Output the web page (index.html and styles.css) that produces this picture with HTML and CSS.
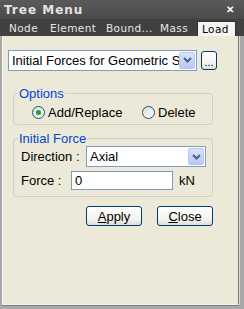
FILE: index.html
```html
<!DOCTYPE html>
<html>
<head>
<meta charset="utf-8">
<link rel="stylesheet" href="styles.css">
</head>
<body>
<div class="win">
  <div class="title">
    <span class="title-text">Tree Menu</span>
    <span class="close">✕</span>
  </div>
  <div class="tabs">
    <span class="tab t-node">Node</span>
    <span class="tab t-elem">Element</span>
    <span class="tab t-bound">Bound...</span>
    <span class="tab t-mass">Mass</span>
    <span class="tab active">Load</span>
  </div>
  <div class="body">
    <div class="top-row">
      <div class="select main-select">
        <span class="sel-text">Initial Forces for Geometric S</span>
        <span class="arrow"><svg width="9" height="6" viewBox="0 0 9 6"><path d="M1 1 L4.5 4.5 L8 1" fill="none" stroke="#4d6185" stroke-width="2"/></svg></span>
      </div>
      <div class="btn dots">...</div>
    </div>

    <fieldset class="group opts">
      <legend>Options</legend>
      <div class="radios">
        <label class="radio r-add"><span class="circle checked"></span>Add/Replace</label>
        <label class="radio r-del"><span class="circle"></span>Delete</label>
      </div>
    </fieldset>

    <fieldset class="group force">
      <legend>Initial Force</legend>
      <div class="row dir-row">
        <span class="lbl lbl-dir">Direction :</span>
        <div class="select dir-select">
          <span class="sel-text">Axial</span>
          <span class="arrow"><svg width="9" height="6" viewBox="0 0 9 6"><path d="M1 1 L4.5 4.5 L8 1" fill="none" stroke="#4d6185" stroke-width="2"/></svg></span>
        </div>
      </div>
      <div class="row force-row">
        <span class="lbl lbl-force">Force :</span>
        <div class="input">0</div>
        <span class="unit">kN</span>
      </div>
    </fieldset>

    <div class="buttons">
      <div class="btn push"><u>A</u>pply</div>
      <div class="btn push"><u>C</u>lose</div>
    </div>
  </div>
</div>
</body>
</html>
```

FILE: styles.css
```css
html, body {
  margin: 0;
  padding: 0;
  width: 244px;
  height: 309px;
  overflow: hidden;
  background: #a8a8a8;
  font-family: "Liberation Sans", Arial, sans-serif;
}
.win {
  width: 244px;
  height: 309px;
  display: flex;
  flex-direction: column;
}
.title {
  height: 19px;
  flex: none;
  background: linear-gradient(#5a5a5a, #4a4a4a);
  display: flex;
  align-items: center;
  justify-content: space-between;
  padding: 0 10px 0 4px;
}
.title-text {
  color: #e4e4e4;
  font-family: "DejaVu Sans", sans-serif;
  font-weight: bold;
  font-size: 12px;
  letter-spacing: 1px;
}
.close {
  color: #ffffff;
  font-size: 10px;
  font-weight: bold;
}
.tabs {
  height: 17px;
  flex: none;
  background: #404040;
  display: flex;
  align-items: flex-end;
  padding-left: 9px;
  padding-right: 8px;
}
.tab {
  color: #e6e6e6;
  font-family: "DejaVu Sans", sans-serif;
  font-size: 10.5px;
  line-height: 15px;
  letter-spacing: 0.4px;
}
.t-node { width: 41px; }
.t-elem { width: 56px; }
.t-bound { width: 54px; }
.t-mass { width: 37px; }
.tab.active {
  background: #f4f4f0;
  color: #000;
  width: 39px;
  height: 15px;
  padding-left: 4px;
  box-sizing: border-box;
  border: 1px solid #303030;
  border-bottom: none;
  border-radius: 2px 2px 0 0;
}
.body {
  flex: 1;
  margin: 0 5px 4px 2px;
  background: #ece9d8;
  border-left: 1px solid #f8f8f8;
  border-right: 1px solid #7a7a7a;
  border-bottom: 1px solid #f0f0f0;
  box-shadow: 1px 0 0 #d8d8d8, 0 1px 0 #808080;
  padding: 14px 0 0 5px;
  font-size: 13px;
  color: #000;
}
.top-row {
  display: flex;
  align-items: center;
  gap: 4px;
  height: 20px;
}
.select {
  background: #fff;
  border: 1px solid #7f9db9;
  display: flex;
  align-items: center;
  box-sizing: border-box;
  padding: 1px 1px 1px 3px;
}
.main-select {
  width: 189px;
  height: 21px;
}
.sel-text {
  flex: 1;
  white-space: nowrap;
  overflow: hidden;
}
.arrow {
  width: 16px;
  height: 17px;
  flex: none;
  background: linear-gradient(#d9e3fb, #b6c9f5);
  border: 1px solid #b6c8f0;
  box-sizing: border-box;
  border-radius: 2px;
  display: flex;
  align-items: center;
  justify-content: center;
}
.btn {
  background: linear-gradient(#ffffff, #f2f2ee 70%, #dedcd4);
  border: 1px solid #003c74;
  border-radius: 3px;
  box-sizing: border-box;
  display: flex;
  align-items: center;
  justify-content: center;
  font-size: 13px;
}
.dots {
  width: 16px;
  height: 19px;
  font-size: 11px;
  padding-top: 3px;
}
.group {
  margin: 0;
  border: 1px solid #d0d0bf;
  border-radius: 4px;
  padding: 0;
  width: 200px;
  box-sizing: border-box;
  margin-left: 5px;
}
.group legend {
  color: #0046d5;
  padding: 0 1px;
  margin-left: 4px;
  font-size: 13px;
  line-height: 13px;
}
.opts {
  margin-top: 17px;
  height: 38px;
}
.radios {
  display: flex;
  padding: 5px 0 0 18px;
}
.radio {
  display: flex;
  align-items: center;
  gap: 3px;
  height: 14px;
}
.r-add { width: 110px; }
.circle {
  width: 11px;
  height: 11px;
  border: 1px solid #1c5180;
  border-radius: 50%;
  background: linear-gradient(135deg, #dcdcd6, #fff);
  position: relative;
}
.circle.checked::after {
  content: "";
  position: absolute;
  left: 3px;
  top: 3px;
  width: 5px;
  height: 5px;
  border-radius: 50%;
  background: #21a121;
}
.force {
  margin-top: 7px;
  height: 65px;
}
.row {
  display: flex;
  align-items: center;
  padding-left: 7px;
}
.dir-row {
  margin-top: 1px;
  height: 21px;
}
.lbl-dir { width: 65px; }
.lbl-force { width: 50px; }
.dir-select {
  width: 120px;
  height: 21px;
}
.force-row {
  margin-top: 4px;
  height: 19px;
}
.input {
  width: 102px;
  height: 19px;
  box-sizing: border-box;
  background: #fff;
  border: 1px solid #7f9db9;
  padding: 1px 0 0 3px;
}
.unit {
  margin-left: 6px;
}
.buttons {
  display: flex;
  gap: 15px;
  padding-left: 78px;
  margin-top: 9px;
}
.push {
  width: 56px;
  height: 20px;
}
```
